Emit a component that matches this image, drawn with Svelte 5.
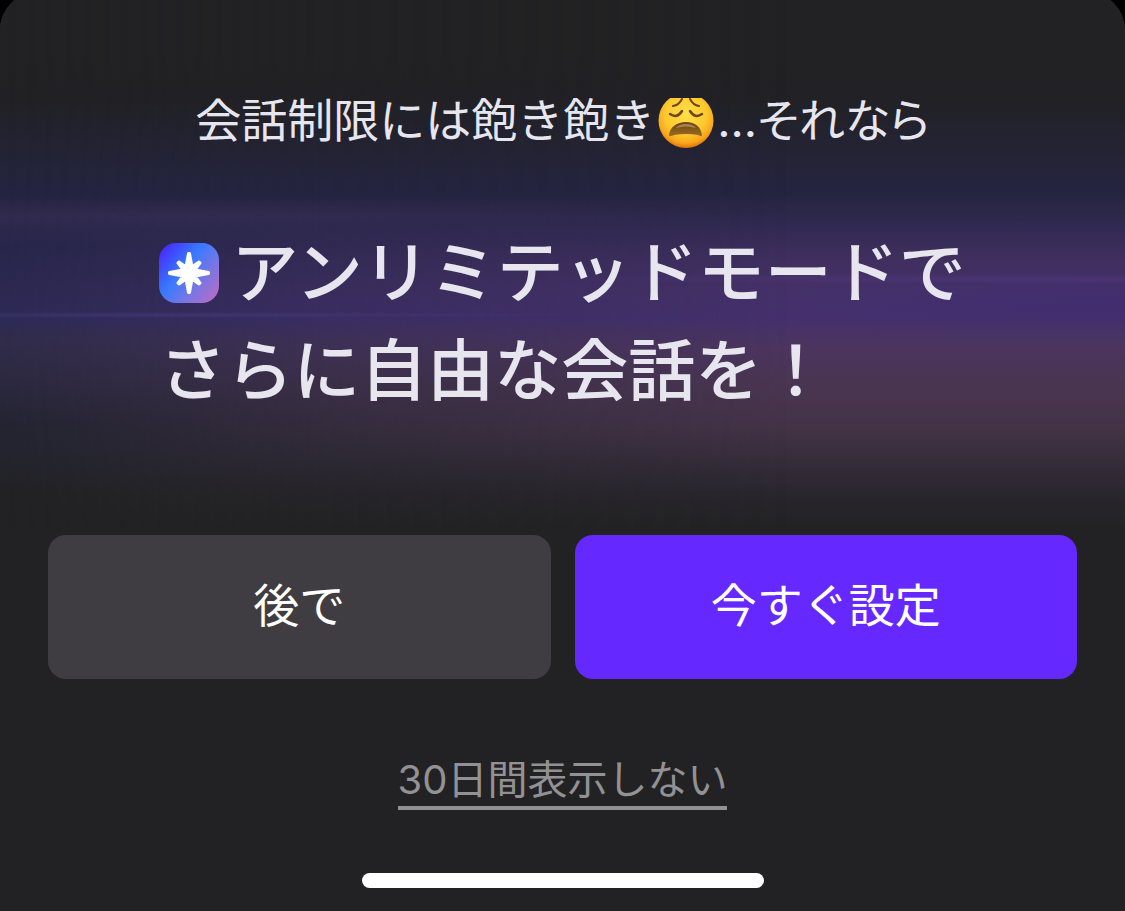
<script lang="ts">
  let { onlater = () => {}, onsetup = () => {}, ondismiss = () => {} } = $props();
</script>

<div class="screen">
  <div class="sheet" role="dialog" aria-labelledby="title">
    <div class="glow" aria-hidden="true"></div>

    <p class="lead">
      <span>会話制限には飽き飽き</span>
      <svg class="emoji" viewBox="0 0 56 51" role="img" aria-label="weary face">
        <defs>
          <radialGradient id="face" cx="50%" cy="38%" r="62%">
            <stop offset="0" stop-color="#ffe04b" />
            <stop offset="0.6" stop-color="#fdc92e" />
            <stop offset="0.86" stop-color="#f8a51b" />
            <stop offset="1" stop-color="#dd7209" />
          </radialGradient>
          <linearGradient id="mouth" x1="0" y1="0" x2="0" y2="1">
            <stop offset="0" stop-color="#6b420b" />
            <stop offset="1" stop-color="#9a6d25" />
          </linearGradient>
        </defs>
        <circle cx="28" cy="22.500" r="27.500" fill="url(#face)" />
        <g fill="none" stroke="#70440b" stroke-linecap="round">
          <path d="M24 1Q21 7 15 8" stroke-width="2" />
          <path d="M32 1Q35 7 41 8" stroke-width="2" />
          <path d="M12 16Q19 21 24 13" stroke-width="2.500" />
          <path d="M44 16Q37 21 32 13" stroke-width="2.500" />
        </g>
        <path d="M11 37C12 29 19 24 28 24S43 29 44 37C44 39 42 38 40 37Q28 35 16 37C14 38 11 39 11 37Z" fill="url(#mouth)" />
        <path d="M18 30Q21 26 28 26T38 30Q28 27 18 30Z" fill="#f5e8d2" opacity="0.350" />
      </svg>
      <span class="tight">...それなら</span>
    </p>

    <h1 id="title">
      <span class="line">
        <svg class="badge" viewBox="0 0 60 60" aria-hidden="true">
          <defs>
            <linearGradient id="badge" x1="0" y1="0.100" x2="1" y2="0.900">
              <stop offset="0" stop-color="#4625ff" />
              <stop offset="0.400" stop-color="#387aff" />
              <stop offset="0.650" stop-color="#7077e8" />
              <stop offset="1" stop-color="#b96cc5" />
            </linearGradient>
          </defs>
          <rect width="60" height="60" rx="17" fill="url(#badge)" />
          <path
            d="M29.500 10.500H30.500L33 24L40 19L41 20L36 27L49.500 29.500V30.500L36 33L41 40L40 41L33 36L30.500 49.500H29.500L27 36L20 41L19 40L24 33L10.500 30.500V29.500L24 27L19 20L20 19L27 24Z"
            fill="#fff"
            stroke="#fff"
            stroke-width="3"
            stroke-linejoin="round"
          />
        </svg>
        アンリミテッドモードで
      </span>
      <span class="line">さらに自由な会話を！</span>
    </h1>

    <div class="actions">
      <button type="button" class="btn secondary" onclick={onlater}>後で</button>
      <button type="button" class="btn primary" onclick={onsetup}>今すぐ設定</button>
    </div>

    <button type="button" class="dismiss" onclick={ondismiss}>30日間表示しない</button>

    <div class="home-indicator" aria-hidden="true"></div>
  </div>
</div>

<style>
  :global(body) {
    margin: 0;
    background: #000;
  }

  .screen {
    min-height: 100vh;
    display: flex;
    overflow: hidden;
    background: #000;
    font-family: Inter, 'Noto Sans CJK JP', sans-serif;
  }

  .sheet {
    position: relative;
    flex: 1;
    box-sizing: border-box;
    margin-top: -8px;
    padding: 92px 48px 23px;
    display: flex;
    flex-direction: column;
    align-items: center;
    overflow: hidden;
    border-radius: 38px 38px 0 0;
    background: #222224;
  }

  .glow,
  .glow::before,
  .glow::after {
    position: absolute;
    inset: 0 0 auto;
    height: 536px;
  }

  .glow {
    background: linear-gradient(
      #222224 60px,
      #212126 110px,
      #242334 155px,
      #24243f 200px,
      #302950 232px,
      #3e2e5d 262px,
      #453167 297px,
      #45306c 325px,
      #4b355f 355px,
      #493550 395px,
      #443347 435px,
      #342c39 473px,
      #27252b 508px,
      #222224 536px
    );
  }

  /* cooler left side of the glow */
  .glow::before {
    content: '';
    background: linear-gradient(
      #222224 60px,
      #212125 110px,
      #232335 160px,
      #252442 205px,
      #2e294c 225px,
      #27264a 255px,
      #2c2850 297px,
      #2d2a56 327px,
      #302c4a 347px,
      #2c2940 385px,
      #242432 430px,
      #23242d 465px,
      #222224 500px
    );
    mask-image: linear-gradient(90deg, #000, rgba(0, 0, 0, 0.5) 28%, transparent 70%);
  }

  /* thin light streaks */
  .glow::after {
    content: '';
    background:
      radial-gradient(420px 3px at 15% 323px, rgba(92, 73, 165, 0.3), transparent),
      radial-gradient(500px 5px at 90% 287px, rgba(108, 66, 170, 0.2), transparent),
      radial-gradient(500px 14px at 20% 222px, rgba(82, 60, 112, 0.14), transparent),
      radial-gradient(460px 34px at 100% 310px, rgba(60, 42, 120, 0.4), transparent);
  }

  .lead,
  h1,
  .actions,
  .dismiss,
  .home-indicator {
    position: relative;
  }

  .lead {
    display: flex;
    align-items: center;
    gap: 3px;
    margin: 0;
    font-size: 46px;
    line-height: 72px;
    color: #e7e6ee;
    white-space: nowrap;
  }

  .tight {
    font-feature-settings: 'palt';
  }

  .emoji {
    width: 56px;
    height: 51px;
    margin-top: 6px;
  }

  h1 {
    margin: 68px 0 0;
    font-size: 67px;
    font-weight: 500;
    line-height: 98px;
    color: #e7e6ee;
    white-space: nowrap;
  }

  .line {
    display: flex;
    align-items: center;
    gap: 12px;
  }

  .badge {
    width: 60px;
    height: 60px;
  }

  .actions {
    align-self: stretch;
    display: grid;
    grid-template-columns: 1fr 1fr;
    gap: 24px;
    margin-top: 115px;
  }

  .btn {
    height: 144px;
    padding: 0 0 10px;
    border: 0;
    border-radius: 18px;
    font: inherit;
    font-size: 46px;
    color: #fff;
    cursor: pointer;
  }

  .secondary {
    background: #3f3d42;
  }

  .primary {
    background: #6528ff;
  }

  .dismiss {
    margin-top: 75px;
    padding: 0;
    border: 0;
    border-bottom: 4px solid #929194;
    background: none;
    font: inherit;
    font-size: 40px;
    line-height: 52px;
    color: #929194;
    cursor: pointer;
  }

  .home-indicator {
    width: 402px;
    height: 15px;
    margin-top: auto;
    border-radius: 8px;
    background: #fff;
  }
</style>
